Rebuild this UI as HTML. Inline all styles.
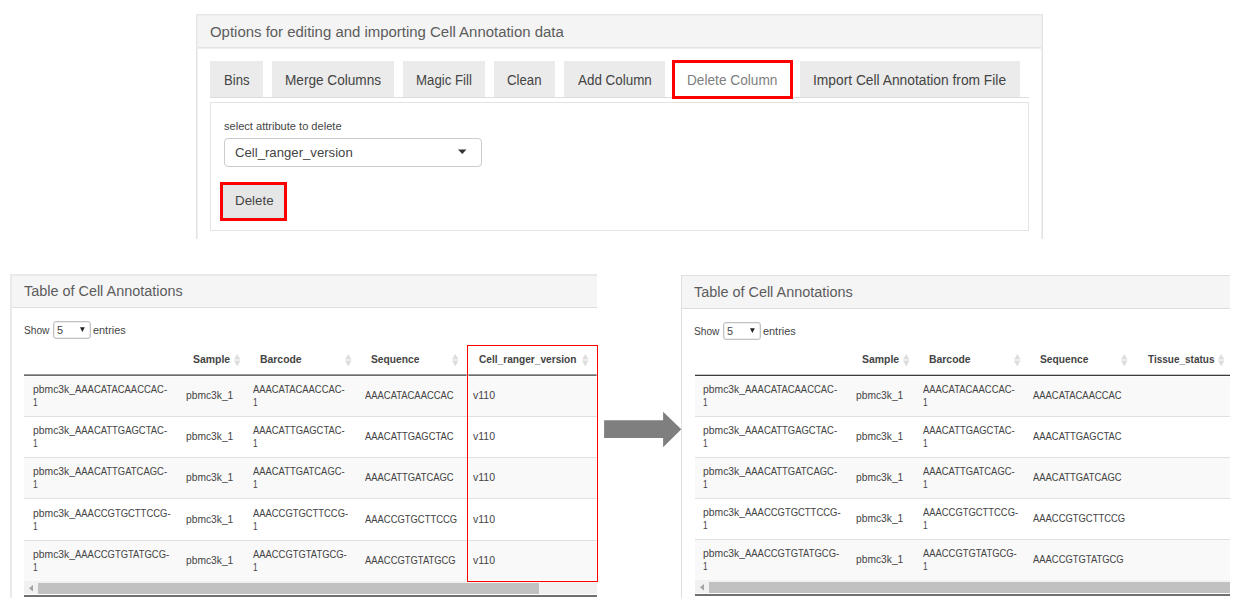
<!DOCTYPE html>
<html><head><meta charset="utf-8"><style>
html,body{margin:0;padding:0;background:#fff;}
body{width:1239px;height:606px;position:relative;overflow:hidden;font-family:"Liberation Sans", sans-serif;}
</style></head><body>
<div style="position:absolute;left:196px;top:14px;width:847px;height:225px;background:#fff"></div>
<div style="position:absolute;left:196px;top:14px;width:847px;height:2px;background:#e6e6e6"></div>
<div style="position:absolute;left:196px;top:14px;width:1px;height:225px;background:#e4e4e4"></div>
<div style="position:absolute;left:197px;top:16px;width:1px;height:223px;background:#eeeeee"></div>
<div style="position:absolute;left:1042px;top:14px;width:1px;height:225px;background:#e4e4e4"></div>
<div style="position:absolute;left:1041px;top:16px;width:1px;height:223px;background:#eeeeee"></div>
<div style="position:absolute;left:198px;top:16px;width:843px;height:31px;background:#f4f4f4"></div>
<div style="position:absolute;left:197px;top:15px;width:845px;height:1px;background:#ededed"></div>
<div style="position:absolute;left:198px;top:47px;width:843px;height:1px;background:#e4e4e4"></div>
<div style="position:absolute;left:198px;top:48px;width:843px;height:1px;background:#eeeeee"></div>
<div style="position:absolute;left:210.13px;top:24.69px;font-size:14.66px;line-height:14.66px;font-weight:400;color:#5c5c5c;white-space:nowrap;transform:scaleX(1.0193);transform-origin:0 0;">Options for editing and importing Cell Annotation data</div>
<div style="position:absolute;left:210px;top:61px;width:53px;height:36px;background:#ebebeb"></div>
<div style="position:absolute;left:223.95px;top:73.58px;font-size:13.97px;line-height:13.97px;font-weight:400;color:#444444;white-space:nowrap;transform:scaleX(0.9389);transform-origin:0 0;">Bins</div>
<div style="position:absolute;left:272px;top:61px;width:122px;height:36px;background:#ebebeb"></div>
<div style="position:absolute;left:284.91px;top:73.58px;font-size:13.97px;line-height:13.97px;font-weight:400;color:#444444;white-space:nowrap;transform:scaleX(0.9745);transform-origin:0 0;">Merge Columns</div>
<div style="position:absolute;left:403px;top:61px;width:82px;height:36px;background:#ebebeb"></div>
<div style="position:absolute;left:415.94px;top:73.58px;font-size:13.97px;line-height:13.97px;font-weight:400;color:#444444;white-space:nowrap;transform:scaleX(0.9475);transform-origin:0 0;">Magic Fill</div>
<div style="position:absolute;left:494px;top:61px;width:61px;height:36px;background:#ebebeb"></div>
<div style="position:absolute;left:507.34px;top:73.58px;font-size:13.97px;line-height:13.97px;font-weight:400;color:#444444;white-space:nowrap;transform:scaleX(0.9445);transform-origin:0 0;">Clean</div>
<div style="position:absolute;left:564px;top:61px;width:101px;height:36px;background:#ebebeb"></div>
<div style="position:absolute;left:578.00px;top:73.58px;font-size:13.97px;line-height:13.97px;font-weight:400;color:#444444;white-space:nowrap;transform:scaleX(0.9605);transform-origin:0 0;">Add Column</div>
<div style="position:absolute;left:800px;top:61px;width:220px;height:36px;background:#ebebeb"></div>
<div style="position:absolute;left:812.76px;top:73.58px;font-size:13.97px;line-height:13.97px;font-weight:400;color:#444444;white-space:nowrap;transform:scaleX(0.9869);transform-origin:0 0;">Import Cell Annotation from File</div>
<div style="position:absolute;left:210px;top:97px;width:819px;height:1px;background:#dddddd"></div>
<div style="position:absolute;left:672px;top:60px;width:121px;height:39px;border:3px solid #ff0000;box-sizing:border-box;background:#fff"></div>
<div style="position:absolute;left:687.41px;top:73.58px;font-size:13.97px;line-height:13.97px;font-weight:400;color:#808080;white-space:nowrap;transform:scaleX(0.9789);transform-origin:0 0;">Delete Column</div>
<div style="position:absolute;left:210px;top:102px;width:819px;height:129px;border:1px solid #e3e3e3;box-sizing:border-box;background:#fff"></div>
<div style="position:absolute;left:223.72px;top:120.78px;font-size:10.89px;line-height:10.89px;font-weight:400;color:#444444;white-space:nowrap;transform:scaleX(1.0179);transform-origin:0 0;">select attribute to delete</div>
<div style="position:absolute;left:224px;top:138px;width:258px;height:29px;border:1px solid #cccccc;border-radius:4px;box-sizing:border-box;background:#fff"></div>
<div style="position:absolute;left:235.04px;top:146.15px;font-size:13.41px;line-height:13.41px;font-weight:400;color:#444444;white-space:nowrap;transform:scaleX(0.9814);transform-origin:0 0;">Cell_ranger_version</div>
<svg style="position:absolute;left:458px;top:149px" width="9" height="6"><polygon points="0,0.5 8.5,0.5 4.25,5" fill="#333"/></svg>
<div style="position:absolute;left:220px;top:182px;width:67px;height:39px;border:3px solid #ff0000;box-sizing:border-box"></div>
<div style="position:absolute;left:223px;top:185px;width:61px;height:33px;background:#e6e6e6;border:1px solid #d8e8e8;box-sizing:border-box"></div>
<div style="position:absolute;left:234.93px;top:194.41px;font-size:13.69px;line-height:13.69px;font-weight:400;color:#444444;white-space:nowrap;transform:scaleX(0.9761);transform-origin:0 0;">Delete</div>
<div style="position:absolute;left:10px;top:274px;width:587px;height:324px;background:#fff"></div>
<div style="position:absolute;left:10px;top:274px;width:2px;height:324px;background:#e9e9e9"></div>
<div style="position:absolute;left:12px;top:274px;width:585px;height:2px;background:#e9e9e9"></div>
<div style="position:absolute;left:12px;top:276px;width:585px;height:31px;background:#f5f5f5"></div>
<div style="position:absolute;left:12px;top:307px;width:585px;height:1px;background:#dedede"></div>
<div style="position:absolute;left:24.11px;top:284.14px;font-size:14.25px;line-height:14.25px;font-weight:400;color:#5c5c5c;white-space:nowrap;transform:scaleX(1.0114);transform-origin:0 0;">Table of Cell Annotations</div>
<div style="position:absolute;left:23.84px;top:325.01px;font-size:10.61px;line-height:10.61px;font-weight:400;color:#444444;white-space:nowrap;transform:scaleX(0.9577);transform-origin:0 0;">Show</div>
<div style="position:absolute;left:53px;top:321px;width:38px;height:18px;border:1px solid #c2c2c2;border-radius:3px;box-sizing:border-box;background:#fff;box-shadow:inset 0 0 0 0.6px #dddddd"></div>
<div style="position:absolute;left:57.36px;top:324.90px;font-size:10.75px;line-height:10.75px;font-weight:400;color:#444444;white-space:nowrap;transform:scaleX(1.0180);transform-origin:0 0;">5</div>
<svg style="position:absolute;left:79.8px;top:327px" width="6" height="6"><polygon points="0,0.2 4.8,0.2 2.4,5" fill="#222"/></svg>
<div style="position:absolute;left:92.86px;top:325.01px;font-size:10.61px;line-height:10.61px;font-weight:400;color:#444444;white-space:nowrap;transform:scaleX(1.0269);transform-origin:0 0;">entries</div>
<div style="position:absolute;left:192.54px;top:353.54px;font-size:11.17px;line-height:11.17px;font-weight:700;color:#444444;white-space:nowrap;transform:scaleX(0.9357);transform-origin:0 0;">Sample</div>
<svg style="position:absolute;left:233.5px;top:353.5px" width="7" height="13"><polygon points="0,5.5 3.25,0 6.5,5.5" fill="#dddddd"/><polygon points="0,6.5 3.25,12.5 6.5,6.5" fill="#dddddd"/></svg>
<div style="position:absolute;left:259.62px;top:353.54px;font-size:11.17px;line-height:11.17px;font-weight:700;color:#444444;white-space:nowrap;transform:scaleX(0.9327);transform-origin:0 0;">Barcode</div>
<svg style="position:absolute;left:344.6px;top:353.5px" width="7" height="13"><polygon points="0,5.5 3.25,0 6.5,5.5" fill="#dddddd"/><polygon points="0,6.5 3.25,12.5 6.5,6.5" fill="#dddddd"/></svg>
<div style="position:absolute;left:371.04px;top:353.54px;font-size:11.17px;line-height:11.17px;font-weight:700;color:#444444;white-space:nowrap;transform:scaleX(0.9184);transform-origin:0 0;">Sequence</div>
<svg style="position:absolute;left:452px;top:353.5px" width="7" height="13"><polygon points="0,5.5 3.25,0 6.5,5.5" fill="#dddddd"/><polygon points="0,6.5 3.25,12.5 6.5,6.5" fill="#dddddd"/></svg>
<div style="position:absolute;left:479.39px;top:353.54px;font-size:11.17px;line-height:11.17px;font-weight:700;color:#444444;white-space:nowrap;transform:scaleX(0.9087);transform-origin:0 0;">Cell_ranger_version</div>
<svg style="position:absolute;left:581.5px;top:353.5px" width="7" height="13"><polygon points="0,5.5 3.25,0 6.5,5.5" fill="#dddddd"/><polygon points="0,6.5 3.25,12.5 6.5,6.5" fill="#dddddd"/></svg>
<div style="position:absolute;left:24px;top:374px;width:573px;height:1px;background:#9a9a9a"></div>
<div style="position:absolute;left:24px;top:375px;width:573px;height:1px;background:#6c6c6c"></div>
<div style="position:absolute;left:24px;top:377px;width:573px;height:39px;background:#f9f9f9"></div>
<div style="position:absolute;left:24px;top:416px;width:573px;height:1px;background:#e0e0e0"></div>
<div style="position:absolute;left:32.58px;top:383.78px;font-size:10.89px;line-height:10.89px;font-weight:400;color:#444444;white-space:nowrap;transform:scaleX(0.9519);transform-origin:0 0;">pbmc3k_</div>
<div style="position:absolute;left:74.80px;top:383.78px;font-size:10.89px;line-height:10.89px;font-weight:400;color:#444444;white-space:nowrap;transform:scaleX(0.8688);transform-origin:0 0;">AAACATACAACCAC-</div>
<div style="position:absolute;left:32.98px;top:396.78px;font-size:10.89px;line-height:10.89px;font-weight:400;color:#444444;white-space:nowrap;transform:scaleX(0.7597);transform-origin:0 0;">1</div>
<div style="position:absolute;left:185.58px;top:389.78px;font-size:10.89px;line-height:10.89px;font-weight:400;color:#444444;white-space:nowrap;transform:scaleX(0.9429);transform-origin:0 0;">pbmc3k_1</div>
<div style="position:absolute;left:253.20px;top:383.78px;font-size:10.89px;line-height:10.89px;font-weight:400;color:#444444;white-space:nowrap;transform:scaleX(0.8650);transform-origin:0 0;">AAACATACAACCAC-</div>
<div style="position:absolute;left:253.08px;top:396.78px;font-size:10.89px;line-height:10.89px;font-weight:400;color:#444444;white-space:nowrap;transform:scaleX(0.7597);transform-origin:0 0;">1</div>
<div style="position:absolute;left:364.60px;top:389.78px;font-size:10.89px;line-height:10.89px;font-weight:400;color:#444444;white-space:nowrap;transform:scaleX(0.8658);transform-origin:0 0;">AAACATACAACCAC</div>
<div style="position:absolute;left:472.60px;top:389.78px;font-size:10.89px;line-height:10.89px;font-weight:400;color:#444444;white-space:nowrap;transform:scaleX(0.9679);transform-origin:0 0;">v110</div>
<div style="position:absolute;left:24px;top:417px;width:573px;height:40px;background:#ffffff"></div>
<div style="position:absolute;left:24px;top:457px;width:573px;height:1px;background:#e0e0e0"></div>
<div style="position:absolute;left:32.58px;top:425.08px;font-size:10.89px;line-height:10.89px;font-weight:400;color:#444444;white-space:nowrap;transform:scaleX(0.9519);transform-origin:0 0;">pbmc3k_</div>
<div style="position:absolute;left:74.80px;top:425.08px;font-size:10.89px;line-height:10.89px;font-weight:400;color:#444444;white-space:nowrap;transform:scaleX(0.8688);transform-origin:0 0;">AAACATTGAGCTAC-</div>
<div style="position:absolute;left:32.98px;top:438.08px;font-size:10.89px;line-height:10.89px;font-weight:400;color:#444444;white-space:nowrap;transform:scaleX(0.7597);transform-origin:0 0;">1</div>
<div style="position:absolute;left:185.58px;top:431.08px;font-size:10.89px;line-height:10.89px;font-weight:400;color:#444444;white-space:nowrap;transform:scaleX(0.9429);transform-origin:0 0;">pbmc3k_1</div>
<div style="position:absolute;left:253.20px;top:425.08px;font-size:10.89px;line-height:10.89px;font-weight:400;color:#444444;white-space:nowrap;transform:scaleX(0.8650);transform-origin:0 0;">AAACATTGAGCTAC-</div>
<div style="position:absolute;left:253.08px;top:438.08px;font-size:10.89px;line-height:10.89px;font-weight:400;color:#444444;white-space:nowrap;transform:scaleX(0.7597);transform-origin:0 0;">1</div>
<div style="position:absolute;left:364.60px;top:431.08px;font-size:10.89px;line-height:10.89px;font-weight:400;color:#444444;white-space:nowrap;transform:scaleX(0.8658);transform-origin:0 0;">AAACATTGAGCTAC</div>
<div style="position:absolute;left:472.60px;top:431.08px;font-size:10.89px;line-height:10.89px;font-weight:400;color:#444444;white-space:nowrap;transform:scaleX(0.9679);transform-origin:0 0;">v110</div>
<div style="position:absolute;left:24px;top:458px;width:573px;height:40px;background:#f9f9f9"></div>
<div style="position:absolute;left:24px;top:498px;width:573px;height:1px;background:#e0e0e0"></div>
<div style="position:absolute;left:32.58px;top:466.38px;font-size:10.89px;line-height:10.89px;font-weight:400;color:#444444;white-space:nowrap;transform:scaleX(0.9519);transform-origin:0 0;">pbmc3k_</div>
<div style="position:absolute;left:74.80px;top:466.38px;font-size:10.89px;line-height:10.89px;font-weight:400;color:#444444;white-space:nowrap;transform:scaleX(0.8688);transform-origin:0 0;">AAACATTGATCAGC-</div>
<div style="position:absolute;left:32.98px;top:479.38px;font-size:10.89px;line-height:10.89px;font-weight:400;color:#444444;white-space:nowrap;transform:scaleX(0.7597);transform-origin:0 0;">1</div>
<div style="position:absolute;left:185.58px;top:472.38px;font-size:10.89px;line-height:10.89px;font-weight:400;color:#444444;white-space:nowrap;transform:scaleX(0.9429);transform-origin:0 0;">pbmc3k_1</div>
<div style="position:absolute;left:253.20px;top:466.38px;font-size:10.89px;line-height:10.89px;font-weight:400;color:#444444;white-space:nowrap;transform:scaleX(0.8650);transform-origin:0 0;">AAACATTGATCAGC-</div>
<div style="position:absolute;left:253.08px;top:479.38px;font-size:10.89px;line-height:10.89px;font-weight:400;color:#444444;white-space:nowrap;transform:scaleX(0.7597);transform-origin:0 0;">1</div>
<div style="position:absolute;left:364.60px;top:472.38px;font-size:10.89px;line-height:10.89px;font-weight:400;color:#444444;white-space:nowrap;transform:scaleX(0.8658);transform-origin:0 0;">AAACATTGATCAGC</div>
<div style="position:absolute;left:472.60px;top:472.38px;font-size:10.89px;line-height:10.89px;font-weight:400;color:#444444;white-space:nowrap;transform:scaleX(0.9679);transform-origin:0 0;">v110</div>
<div style="position:absolute;left:24px;top:499px;width:573px;height:41px;background:#ffffff"></div>
<div style="position:absolute;left:24px;top:540px;width:573px;height:1px;background:#e0e0e0"></div>
<div style="position:absolute;left:32.58px;top:507.68px;font-size:10.89px;line-height:10.89px;font-weight:400;color:#444444;white-space:nowrap;transform:scaleX(0.9519);transform-origin:0 0;">pbmc3k_</div>
<div style="position:absolute;left:74.80px;top:507.68px;font-size:10.89px;line-height:10.89px;font-weight:400;color:#444444;white-space:nowrap;transform:scaleX(0.8688);transform-origin:0 0;">AAACCGTGCTTCCG-</div>
<div style="position:absolute;left:32.98px;top:520.68px;font-size:10.89px;line-height:10.89px;font-weight:400;color:#444444;white-space:nowrap;transform:scaleX(0.7597);transform-origin:0 0;">1</div>
<div style="position:absolute;left:185.58px;top:513.68px;font-size:10.89px;line-height:10.89px;font-weight:400;color:#444444;white-space:nowrap;transform:scaleX(0.9429);transform-origin:0 0;">pbmc3k_1</div>
<div style="position:absolute;left:253.20px;top:507.68px;font-size:10.89px;line-height:10.89px;font-weight:400;color:#444444;white-space:nowrap;transform:scaleX(0.8650);transform-origin:0 0;">AAACCGTGCTTCCG-</div>
<div style="position:absolute;left:253.08px;top:520.68px;font-size:10.89px;line-height:10.89px;font-weight:400;color:#444444;white-space:nowrap;transform:scaleX(0.7597);transform-origin:0 0;">1</div>
<div style="position:absolute;left:364.60px;top:513.68px;font-size:10.89px;line-height:10.89px;font-weight:400;color:#444444;white-space:nowrap;transform:scaleX(0.8658);transform-origin:0 0;">AAACCGTGCTTCCG</div>
<div style="position:absolute;left:472.60px;top:513.68px;font-size:10.89px;line-height:10.89px;font-weight:400;color:#444444;white-space:nowrap;transform:scaleX(0.9679);transform-origin:0 0;">v110</div>
<div style="position:absolute;left:24px;top:541px;width:573px;height:40px;background:#f9f9f9"></div>
<div style="position:absolute;left:32.58px;top:548.98px;font-size:10.89px;line-height:10.89px;font-weight:400;color:#444444;white-space:nowrap;transform:scaleX(0.9519);transform-origin:0 0;">pbmc3k_</div>
<div style="position:absolute;left:74.80px;top:548.98px;font-size:10.89px;line-height:10.89px;font-weight:400;color:#444444;white-space:nowrap;transform:scaleX(0.8688);transform-origin:0 0;">AAACCGTGTATGCG-</div>
<div style="position:absolute;left:32.98px;top:561.98px;font-size:10.89px;line-height:10.89px;font-weight:400;color:#444444;white-space:nowrap;transform:scaleX(0.7597);transform-origin:0 0;">1</div>
<div style="position:absolute;left:185.58px;top:554.98px;font-size:10.89px;line-height:10.89px;font-weight:400;color:#444444;white-space:nowrap;transform:scaleX(0.9429);transform-origin:0 0;">pbmc3k_1</div>
<div style="position:absolute;left:253.20px;top:548.98px;font-size:10.89px;line-height:10.89px;font-weight:400;color:#444444;white-space:nowrap;transform:scaleX(0.8650);transform-origin:0 0;">AAACCGTGTATGCG-</div>
<div style="position:absolute;left:253.08px;top:561.98px;font-size:10.89px;line-height:10.89px;font-weight:400;color:#444444;white-space:nowrap;transform:scaleX(0.7597);transform-origin:0 0;">1</div>
<div style="position:absolute;left:364.60px;top:554.98px;font-size:10.89px;line-height:10.89px;font-weight:400;color:#444444;white-space:nowrap;transform:scaleX(0.8658);transform-origin:0 0;">AAACCGTGTATGCG</div>
<div style="position:absolute;left:472.60px;top:554.98px;font-size:10.89px;line-height:10.89px;font-weight:400;color:#444444;white-space:nowrap;transform:scaleX(0.9679);transform-origin:0 0;">v110</div>
<div style="position:absolute;left:24px;top:581px;width:573px;height:13px;background:#f1f1f1"></div>
<div style="position:absolute;left:38px;top:583px;width:501px;height:11px;background:#c1c1c1"></div>
<svg style="position:absolute;left:29px;top:585px" width="5" height="7"><polygon points="4,0 4,6.5 0,3.25" fill="#a3a3a3"/></svg>
<div style="position:absolute;left:24px;top:595px;width:573px;height:2px;background:#707070"></div>
<div style="position:absolute;left:681px;top:275px;width:549px;height:323px;background:#fff"></div>
<div style="position:absolute;left:681px;top:275px;width:1px;height:323px;background:#e0e0e0"></div>
<div style="position:absolute;left:682px;top:275px;width:548px;height:1px;background:#e0e0e0"></div>
<div style="position:absolute;left:682px;top:276px;width:548px;height:32px;background:#f5f5f5"></div>
<div style="position:absolute;left:682px;top:308px;width:548px;height:1px;background:#dedede"></div>
<div style="position:absolute;left:694.11px;top:284.84px;font-size:14.25px;line-height:14.25px;font-weight:400;color:#5c5c5c;white-space:nowrap;transform:scaleX(1.0114);transform-origin:0 0;">Table of Cell Annotations</div>
<div style="position:absolute;left:693.84px;top:325.71px;font-size:10.61px;line-height:10.61px;font-weight:400;color:#444444;white-space:nowrap;transform:scaleX(0.9577);transform-origin:0 0;">Show</div>
<div style="position:absolute;left:723px;top:321.7px;width:38px;height:18px;border:1px solid #c2c2c2;border-radius:3px;box-sizing:border-box;background:#fff;box-shadow:inset 0 0 0 0.6px #dddddd"></div>
<div style="position:absolute;left:727.36px;top:325.60px;font-size:10.75px;line-height:10.75px;font-weight:400;color:#444444;white-space:nowrap;transform:scaleX(1.0180);transform-origin:0 0;">5</div>
<svg style="position:absolute;left:749.8px;top:327.7px" width="6" height="6"><polygon points="0,0.2 4.8,0.2 2.4,5" fill="#222"/></svg>
<div style="position:absolute;left:762.86px;top:325.71px;font-size:10.61px;line-height:10.61px;font-weight:400;color:#444444;white-space:nowrap;transform:scaleX(1.0269);transform-origin:0 0;">entries</div>
<div style="position:absolute;left:862.34px;top:353.54px;font-size:11.17px;line-height:11.17px;font-weight:700;color:#444444;white-space:nowrap;transform:scaleX(0.9357);transform-origin:0 0;">Sample</div>
<svg style="position:absolute;left:902.8px;top:353.5px" width="7" height="13"><polygon points="0,5.5 3.25,0 6.5,5.5" fill="#dddddd"/><polygon points="0,6.5 3.25,12.5 6.5,6.5" fill="#dddddd"/></svg>
<div style="position:absolute;left:929.02px;top:353.54px;font-size:11.17px;line-height:11.17px;font-weight:700;color:#444444;white-space:nowrap;transform:scaleX(0.9327);transform-origin:0 0;">Barcode</div>
<svg style="position:absolute;left:1013.5px;top:353.5px" width="7" height="13"><polygon points="0,5.5 3.25,0 6.5,5.5" fill="#dddddd"/><polygon points="0,6.5 3.25,12.5 6.5,6.5" fill="#dddddd"/></svg>
<div style="position:absolute;left:1039.74px;top:353.54px;font-size:11.17px;line-height:11.17px;font-weight:700;color:#444444;white-space:nowrap;transform:scaleX(0.9184);transform-origin:0 0;">Sequence</div>
<svg style="position:absolute;left:1120.6px;top:353.5px" width="7" height="13"><polygon points="0,5.5 3.25,0 6.5,5.5" fill="#dddddd"/><polygon points="0,6.5 3.25,12.5 6.5,6.5" fill="#dddddd"/></svg>
<div style="position:absolute;left:1147.50px;top:353.54px;font-size:11.17px;line-height:11.17px;font-weight:700;color:#444444;white-space:nowrap;transform:scaleX(0.8956);transform-origin:0 0;">Tissue_status</div>
<svg style="position:absolute;left:1217.6px;top:353.5px" width="7" height="13"><polygon points="0,5.5 3.25,0 6.5,5.5" fill="#dddddd"/><polygon points="0,6.5 3.25,12.5 6.5,6.5" fill="#dddddd"/></svg>
<div style="position:absolute;left:695px;top:374px;width:535px;height:1px;background:#c8c8c8"></div>
<div style="position:absolute;left:695px;top:375px;width:535px;height:1px;background:#3c3c3c"></div>
<div style="position:absolute;left:695px;top:377px;width:535px;height:39px;background:#f9f9f9"></div>
<div style="position:absolute;left:695px;top:416px;width:535px;height:1px;background:#e0e0e0"></div>
<div style="position:absolute;left:702.58px;top:383.78px;font-size:10.89px;line-height:10.89px;font-weight:400;color:#444444;white-space:nowrap;transform:scaleX(0.9519);transform-origin:0 0;">pbmc3k_</div>
<div style="position:absolute;left:744.80px;top:383.78px;font-size:10.89px;line-height:10.89px;font-weight:400;color:#444444;white-space:nowrap;transform:scaleX(0.8688);transform-origin:0 0;">AAACATACAACCAC-</div>
<div style="position:absolute;left:702.98px;top:396.78px;font-size:10.89px;line-height:10.89px;font-weight:400;color:#444444;white-space:nowrap;transform:scaleX(0.7597);transform-origin:0 0;">1</div>
<div style="position:absolute;left:855.58px;top:389.78px;font-size:10.89px;line-height:10.89px;font-weight:400;color:#444444;white-space:nowrap;transform:scaleX(0.9429);transform-origin:0 0;">pbmc3k_1</div>
<div style="position:absolute;left:922.70px;top:383.78px;font-size:10.89px;line-height:10.89px;font-weight:400;color:#444444;white-space:nowrap;transform:scaleX(0.8650);transform-origin:0 0;">AAACATACAACCAC-</div>
<div style="position:absolute;left:922.58px;top:396.78px;font-size:10.89px;line-height:10.89px;font-weight:400;color:#444444;white-space:nowrap;transform:scaleX(0.7597);transform-origin:0 0;">1</div>
<div style="position:absolute;left:1033.30px;top:389.78px;font-size:10.89px;line-height:10.89px;font-weight:400;color:#444444;white-space:nowrap;transform:scaleX(0.8658);transform-origin:0 0;">AAACATACAACCAC</div>
<div style="position:absolute;left:695px;top:417px;width:535px;height:40px;background:#ffffff"></div>
<div style="position:absolute;left:695px;top:457px;width:535px;height:1px;background:#e0e0e0"></div>
<div style="position:absolute;left:702.58px;top:424.93px;font-size:10.89px;line-height:10.89px;font-weight:400;color:#444444;white-space:nowrap;transform:scaleX(0.9519);transform-origin:0 0;">pbmc3k_</div>
<div style="position:absolute;left:744.80px;top:424.93px;font-size:10.89px;line-height:10.89px;font-weight:400;color:#444444;white-space:nowrap;transform:scaleX(0.8688);transform-origin:0 0;">AAACATTGAGCTAC-</div>
<div style="position:absolute;left:702.98px;top:437.93px;font-size:10.89px;line-height:10.89px;font-weight:400;color:#444444;white-space:nowrap;transform:scaleX(0.7597);transform-origin:0 0;">1</div>
<div style="position:absolute;left:855.58px;top:430.93px;font-size:10.89px;line-height:10.89px;font-weight:400;color:#444444;white-space:nowrap;transform:scaleX(0.9429);transform-origin:0 0;">pbmc3k_1</div>
<div style="position:absolute;left:922.70px;top:424.93px;font-size:10.89px;line-height:10.89px;font-weight:400;color:#444444;white-space:nowrap;transform:scaleX(0.8650);transform-origin:0 0;">AAACATTGAGCTAC-</div>
<div style="position:absolute;left:922.58px;top:437.93px;font-size:10.89px;line-height:10.89px;font-weight:400;color:#444444;white-space:nowrap;transform:scaleX(0.7597);transform-origin:0 0;">1</div>
<div style="position:absolute;left:1033.30px;top:430.93px;font-size:10.89px;line-height:10.89px;font-weight:400;color:#444444;white-space:nowrap;transform:scaleX(0.8658);transform-origin:0 0;">AAACATTGAGCTAC</div>
<div style="position:absolute;left:695px;top:458px;width:535px;height:40px;background:#f9f9f9"></div>
<div style="position:absolute;left:695px;top:498px;width:535px;height:1px;background:#e0e0e0"></div>
<div style="position:absolute;left:702.58px;top:466.08px;font-size:10.89px;line-height:10.89px;font-weight:400;color:#444444;white-space:nowrap;transform:scaleX(0.9519);transform-origin:0 0;">pbmc3k_</div>
<div style="position:absolute;left:744.80px;top:466.08px;font-size:10.89px;line-height:10.89px;font-weight:400;color:#444444;white-space:nowrap;transform:scaleX(0.8688);transform-origin:0 0;">AAACATTGATCAGC-</div>
<div style="position:absolute;left:702.98px;top:479.08px;font-size:10.89px;line-height:10.89px;font-weight:400;color:#444444;white-space:nowrap;transform:scaleX(0.7597);transform-origin:0 0;">1</div>
<div style="position:absolute;left:855.58px;top:472.08px;font-size:10.89px;line-height:10.89px;font-weight:400;color:#444444;white-space:nowrap;transform:scaleX(0.9429);transform-origin:0 0;">pbmc3k_1</div>
<div style="position:absolute;left:922.70px;top:466.08px;font-size:10.89px;line-height:10.89px;font-weight:400;color:#444444;white-space:nowrap;transform:scaleX(0.8650);transform-origin:0 0;">AAACATTGATCAGC-</div>
<div style="position:absolute;left:922.58px;top:479.08px;font-size:10.89px;line-height:10.89px;font-weight:400;color:#444444;white-space:nowrap;transform:scaleX(0.7597);transform-origin:0 0;">1</div>
<div style="position:absolute;left:1033.30px;top:472.08px;font-size:10.89px;line-height:10.89px;font-weight:400;color:#444444;white-space:nowrap;transform:scaleX(0.8658);transform-origin:0 0;">AAACATTGATCAGC</div>
<div style="position:absolute;left:695px;top:499px;width:535px;height:40px;background:#ffffff"></div>
<div style="position:absolute;left:695px;top:539px;width:535px;height:1px;background:#e0e0e0"></div>
<div style="position:absolute;left:702.58px;top:507.23px;font-size:10.89px;line-height:10.89px;font-weight:400;color:#444444;white-space:nowrap;transform:scaleX(0.9519);transform-origin:0 0;">pbmc3k_</div>
<div style="position:absolute;left:744.80px;top:507.23px;font-size:10.89px;line-height:10.89px;font-weight:400;color:#444444;white-space:nowrap;transform:scaleX(0.8688);transform-origin:0 0;">AAACCGTGCTTCCG-</div>
<div style="position:absolute;left:702.98px;top:520.23px;font-size:10.89px;line-height:10.89px;font-weight:400;color:#444444;white-space:nowrap;transform:scaleX(0.7597);transform-origin:0 0;">1</div>
<div style="position:absolute;left:855.58px;top:513.23px;font-size:10.89px;line-height:10.89px;font-weight:400;color:#444444;white-space:nowrap;transform:scaleX(0.9429);transform-origin:0 0;">pbmc3k_1</div>
<div style="position:absolute;left:922.70px;top:507.23px;font-size:10.89px;line-height:10.89px;font-weight:400;color:#444444;white-space:nowrap;transform:scaleX(0.8650);transform-origin:0 0;">AAACCGTGCTTCCG-</div>
<div style="position:absolute;left:922.58px;top:520.23px;font-size:10.89px;line-height:10.89px;font-weight:400;color:#444444;white-space:nowrap;transform:scaleX(0.7597);transform-origin:0 0;">1</div>
<div style="position:absolute;left:1033.30px;top:513.23px;font-size:10.89px;line-height:10.89px;font-weight:400;color:#444444;white-space:nowrap;transform:scaleX(0.8658);transform-origin:0 0;">AAACCGTGCTTCCG</div>
<div style="position:absolute;left:695px;top:540px;width:535px;height:40px;background:#f9f9f9"></div>
<div style="position:absolute;left:702.58px;top:548.38px;font-size:10.89px;line-height:10.89px;font-weight:400;color:#444444;white-space:nowrap;transform:scaleX(0.9519);transform-origin:0 0;">pbmc3k_</div>
<div style="position:absolute;left:744.80px;top:548.38px;font-size:10.89px;line-height:10.89px;font-weight:400;color:#444444;white-space:nowrap;transform:scaleX(0.8688);transform-origin:0 0;">AAACCGTGTATGCG-</div>
<div style="position:absolute;left:702.98px;top:561.38px;font-size:10.89px;line-height:10.89px;font-weight:400;color:#444444;white-space:nowrap;transform:scaleX(0.7597);transform-origin:0 0;">1</div>
<div style="position:absolute;left:855.58px;top:554.38px;font-size:10.89px;line-height:10.89px;font-weight:400;color:#444444;white-space:nowrap;transform:scaleX(0.9429);transform-origin:0 0;">pbmc3k_1</div>
<div style="position:absolute;left:922.70px;top:548.38px;font-size:10.89px;line-height:10.89px;font-weight:400;color:#444444;white-space:nowrap;transform:scaleX(0.8650);transform-origin:0 0;">AAACCGTGTATGCG-</div>
<div style="position:absolute;left:922.58px;top:561.38px;font-size:10.89px;line-height:10.89px;font-weight:400;color:#444444;white-space:nowrap;transform:scaleX(0.7597);transform-origin:0 0;">1</div>
<div style="position:absolute;left:1033.30px;top:554.38px;font-size:10.89px;line-height:10.89px;font-weight:400;color:#444444;white-space:nowrap;transform:scaleX(0.8658);transform-origin:0 0;">AAACCGTGTATGCG</div>
<div style="position:absolute;left:695px;top:580px;width:535px;height:13px;background:#f1f1f1"></div>
<div style="position:absolute;left:709px;top:582px;width:521px;height:11px;background:#c1c1c1"></div>
<svg style="position:absolute;left:699.5px;top:584px" width="5" height="7"><polygon points="4,0 4,6.5 0,3.25" fill="#a3a3a3"/></svg>
<div style="position:absolute;left:695px;top:594px;width:535px;height:2px;background:#707070"></div>
<div style="position:absolute;left:466px;top:344px;width:133px;height:239px;border:1px solid rgba(250,255,255,0.4);box-sizing:border-box"></div>
<div style="position:absolute;left:468px;top:346px;width:129px;height:235px;border:1px solid rgba(250,255,255,0.4);box-sizing:border-box"></div>
<div style="position:absolute;left:467px;top:345px;width:131px;height:237px;border:1px solid #ff0000;box-sizing:border-box"></div>
<svg style="position:absolute;left:600px;top:405px" width="90" height="50"><polygon points="4.1,15.3 63.1,15.3 63.1,6.7 81.3,24.2 63.1,42.3 63.1,33.1 4.1,33.1" fill="#7f7f7f"/></svg>
</body></html>
